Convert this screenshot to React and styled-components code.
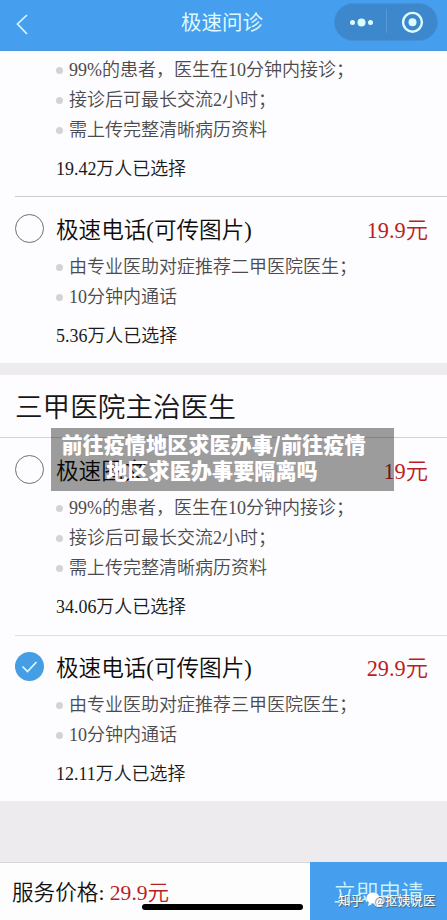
import React from "react";
import styled, { createGlobalStyle } from "styled-components";

const GlobalStyle = createGlobalStyle`
  * { box-sizing: border-box; }
  body {
    margin: 0;
    background: #edebed;
    font-family: "Liberation Serif", "Noto Sans CJK SC", sans-serif;
    font-weight: 350;
  }
`;

const Screen = styled.div`
  position: relative;
  display: flex;
  flex-direction: column;
  width: 447px;
  height: 920px;
  overflow: hidden;
  background: #edebed;
`;

const Header = styled.header`
  display: grid;
  grid-template-columns: 115px 1fr 113px;
  align-items: center;
  flex: none;
  height: 51px;
  padding-bottom: 6px;
  background: #459eee;
  border-bottom: 1px solid #4c97d8;
`;

const BackIcon = styled.svg`
  width: 14px;
  height: 24px;
  margin: 3px 0 0 15px;
`;

const PageTitle = styled.h1`
  margin: 2px 0 0 -5px;
  font-size: 20.5px;
  line-height: 30px;
  font-weight: 400;
  text-align: center;
  color: #dffaff;
`;

const Capsule = styled.div`
  display: flex;
  align-items: center;
  width: 104px;
  height: 38px;
  border-radius: 19px;
  background: #3d87cc;
  border: 1px solid #4391da;
`;

const CapsuleIcon = styled.svg`
  flex: none;
  width: 104px;
  height: 38px;
  margin: -1px;
`;

const Panel = styled.section`
  flex: none;
  height: ${(p) => p.$height}px;
  margin-bottom: ${(p) => p.$gap || 0}px;
  padding-top: ${(p) => p.$top || 0}px;
  background: #fdfcfe;
`;

const PanelTitle = styled.h2`
  height: 62px;
  margin: 0;
  padding-left: 15px;
  border-bottom: 1px solid #d2d1d3;
  font-size: 27.6px;
  line-height: 64px;
  font-weight: 350;
  color: #161616;
`;

const Divider = styled.div`
  height: 1px;
  margin-left: 15px;
  background: ${(p) => p.$color || "#cccbcd"};
`;

const Option = styled.article`
  display: grid;
  grid-template-columns: 41px 1fr;
  padding: ${(p) => p.$top}px 0 ${(p) => p.$bottom}px 15px;
`;

const RadioIcon = styled.svg`
  width: 30px;
  height: 30px;
  margin-top: 5px;
`;

const Details = styled.div`
  grid-column: 2;
`;

const TitleRow = styled.div`
  display: flex;
  justify-content: space-between;
  height: 44px;
  padding-right: 19px;
  font-size: 22.6px;
  line-height: 46px;
  color: #0c0c0c;
  white-space: nowrap;
`;

const Price = styled.span`
  color: #b91f22;
  font-size: ${(p) => p.$size}px;
`;

const Bullets = styled.ul`
  margin: 0;
  padding: 0;
  list-style: none;
`;

const Bullet = styled.li`
  display: flex;
  align-items: center;
  height: 30px;
  font-size: 18px;
  line-height: 32px;
  color: #4b4b4d;
  white-space: nowrap;

  &::before {
    content: "";
    width: 7px;
    height: 7px;
    margin-right: 6px;
    border-radius: 50%;
    background: #d3d2d4;
  }
`;

const Count = styled.div`
  height: 46px;
  font-size: 17.95px;
  line-height: 48px;
  color: #1a1a1a;
`;

const Footer = styled.footer`
  display: flex;
  height: 58px;
  margin-top: auto;
  background: #fdfdfe;
`;

const Total = styled.div`
  width: 310px;
  padding-left: 12px;
  border-top: 1px solid #d8d7d9;
  font-size: 21.6px;
  line-height: 60px;
  color: #111;
`;

const Apply = styled.button`
  flex: 1;
  padding: 0;
  border: 0;
  background: #459eee;
  color: #c8f3ff;
  font: 350 22.5px/64px "Liberation Serif", "Noto Sans CJK SC", sans-serif;
`;

const HomeBar = styled.div`
  position: absolute;
  left: 142px;
  bottom: 10px;
  width: 161px;
  height: 6px;
  border-radius: 3px;
  background: #000;
`;

const Watermark = styled.div`
  position: absolute;
  left: 338px;
  bottom: 11px;
  display: flex;
  align-items: center;
  font: 400 12.6px/18px "Noto Sans CJK SC", sans-serif;
  color: #fff;
  text-shadow: 1px 1px 1px #555;
  white-space: nowrap;
`;

const WatermarkIcon = styled.svg`
  width: 18px;
  height: 16px;
  margin: 0 -11px 0 3px;
`;

const Caption = styled.div`
  position: absolute;
  left: 51px;
  top: 428px;
  width: 343px;
  height: 63px;
  padding: 3px 21px 0 3px;
  background: rgba(0, 0, 0, 0.38);
  font: 900 21.15px/26px "Noto Sans CJK SC", sans-serif;
  text-align: center;
  color: #fff;
  white-space: nowrap;
`;

const CaptionLine = styled.div`
  padding-right: ${(p) => p.$shift || 0}px;
`;

function Radio({ checked }) {
  return (
    <RadioIcon viewBox="0 0 30 30" fill="none">
      {checked ? (
        <>
          <circle cx="14.5" cy="15.5" r="14.5" fill="#459ee4" />
          <path d="M7.5 15.5l5 5L21.5 11" stroke="#dcfaff" strokeWidth="1.7" />
        </>
      ) : (
        <circle cx="14.5" cy="15.5" r="14" stroke="#707072" />
      )}
    </RadioIcon>
  );
}

function Choice({ title, price, checked, items, count, top = 0, bottom = 5 }) {
  return (
    <Option $top={top} $bottom={bottom}>
      {title && <Radio checked={checked} />}
      <Details>
        {title && (
          <TitleRow>
            <span>{title}</span>
            <Price $size={22.3}>{price}</Price>
          </TitleRow>
        )}
        <Bullets>
          {items.map((item) => (
            <Bullet key={item}>{item}</Bullet>
          ))}
        </Bullets>
        <Count>{count}万人已选择</Count>
      </Details>
    </Option>
  );
}

const textItems = ["99%的患者，医生在10分钟内接诊；", "接诊后可最长交流2小时；", "需上传完整清晰病历资料"];
const phoneItems = (level) => [`由专业医助对症推荐${level}甲医院医生；`, "10分钟内通话"];

export default function App() {
  return (
    <>
      <GlobalStyle />
      <Screen>
        <Header>
          <BackIcon viewBox="0 0 14 24" fill="none">
            <path d="M12 3L2.5 12L12 22" stroke="#d8f8ff" strokeWidth="1.7" />
          </BackIcon>
          <PageTitle>极速问诊</PageTitle>
          <Capsule>
            <CapsuleIcon viewBox="0 0 104 38" fill="none">
              <g fill="#dcfcff">
                <circle cx="18.5" cy="19.5" r="2.5" />
                <circle cx="27.5" cy="19.5" r="4" />
                <circle cx="36.5" cy="19.5" r="2.5" />
                <circle cx="78.5" cy="19.3" r="4" />
              </g>
              <path d="M52.5 6v24" stroke="#5799d4" />
              <circle cx="78.5" cy="19.3" r="9.4" stroke="#dcfcff" strokeWidth="2.4" />
            </CapsuleIcon>
          </Capsule>
        </Header>

        <Panel $height={312} $gap={12} $top={4}>
          <Choice items={textItems} count="19.42" />
          <Divider />
          <Choice top={11} title="极速电话(可传图片)" price="19.9元" items={phoneItems("二")} count="5.36" />
        </Panel>

        <Panel $height={426} $top={1}>
          <PanelTitle>三甲医院主治医生</PanelTitle>
          <Choice top={11} bottom={6} title="极速图文" price="19元" items={textItems} count="34.06" />
          <Divider $color="#dfdee0" />
          <Choice checked top={10} title="极速电话(可传图片)" price="29.9元" items={phoneItems("三")} count="12.11" />
        </Panel>

        <Footer>
          <Total>
            服务价格: <Price $size={21.6}>29.9元</Price>
          </Total>
          <Apply>立即申请</Apply>
        </Footer>

        <Caption>
          <CaptionLine>前往疫情地区求医办事/前往疫情</CaptionLine>
          <CaptionLine $shift={3}>地区求医办事要隔离吗</CaptionLine>
        </Caption>
        <HomeBar />
        <Watermark>
          <span>知乎</span>
          <WatermarkIcon viewBox="0 0 18 16" fill="#fff">
            <ellipse cx="7" cy="6" rx="6.5" ry="5.5" />
            <path d="M3 10l-1 4 4-2z" />
            <ellipse cx="12.5" cy="10" rx="5" ry="4.2" />
            <path d="M14 13l3 2-1-4z" />
          </WatermarkIcon>
          <span>@抠姨说医</span>
        </Watermark>
      </Screen>
    </>
  );
}
